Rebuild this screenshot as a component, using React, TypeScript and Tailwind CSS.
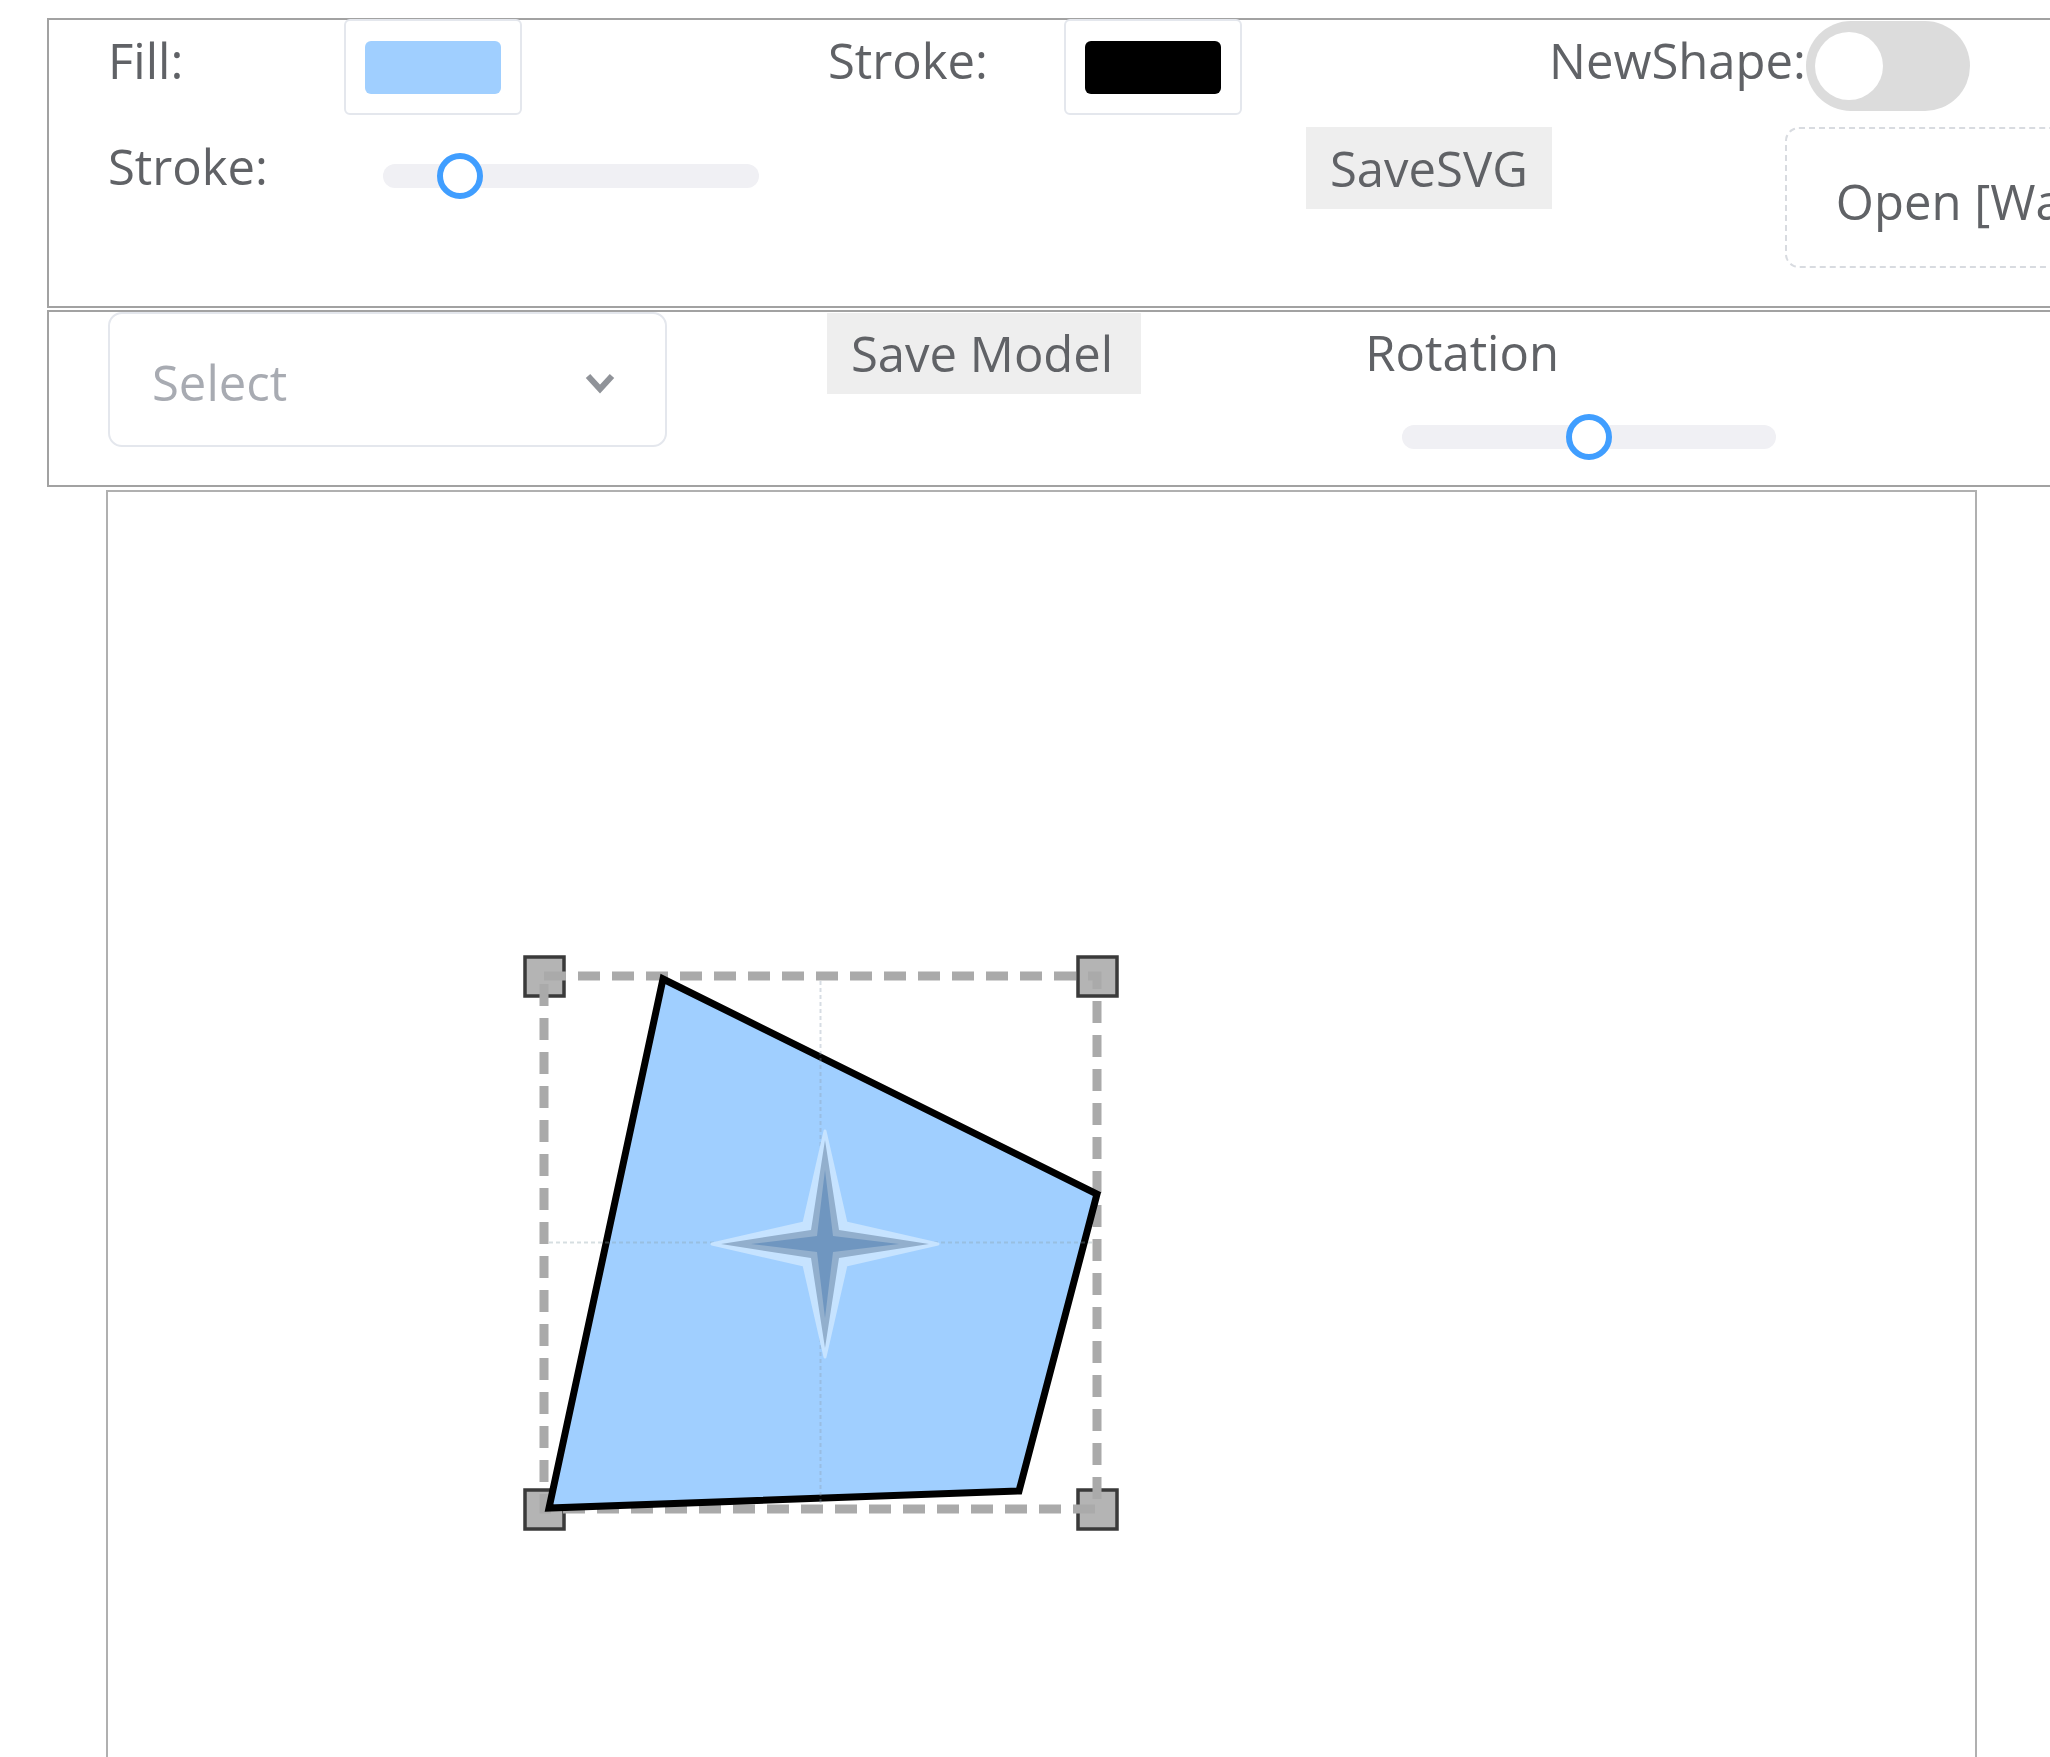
import React from 'react';

const Label: React.FC<{ text: string; className?: string }> = ({ text, className = '' }) => (
  <div className={`text-[49px] leading-none text-[#606266] whitespace-nowrap ${className}`}>{text}</div>
);

const Swatch: React.FC<{ color: string }> = ({ color }) => (
  <div className="mt-[-1px] flex h-[96px] w-[178px] shrink-0 items-center justify-center rounded-[6px] border-2 border-[#e4e7ed] bg-white">
    <div className="h-[53px] w-[136px] rounded-[6px]" style={{ backgroundColor: color }} />
  </div>
);

const Slider: React.FC<{ width: number; pos: number; className?: string }> = ({ width, pos, className = '' }) => (
  <div className={`relative flex h-[46px] shrink-0 items-center ${className}`} style={{ width }}>
    <div className="h-[24px] w-full rounded-full bg-[#f0f0f4]" />
    <div
      className="absolute top-0 h-[46px] w-[46px] rounded-full border-[6px] border-[#409eff] bg-white"
      style={{ left: pos - 23 }}
    />
  </div>
);

// editable shape on the canvas: polygon, bounding box with handles, center marker
const ShapeCanvas: React.FC = () => {
  const box = { x1: 436, y1: 484, x2: 989, y2: 1017 };
  const cx = (box.x1 + box.x2) / 2;
  const cy = (box.y1 + box.y2) / 2;
  const star = (x: number, y: number, R: number, w: number) =>
    `M${x} ${y - R} L${x + w} ${y - w} L${x + R} ${y} L${x + w} ${y + w} L${x} ${y + R} L${x - w} ${y + w} L${x - R} ${y} L${x - w} ${y - w} Z`;
  const corners = [
    [box.x1, box.y1],
    [box.x2, box.y1],
    [box.x1, box.y2],
    [box.x2, box.y2],
  ];
  return (
    <svg width="1869" height="1300" className="block">
      {corners.map(([x, y], i) => (
        <rect key={i} x={x - 19} y={y - 19} width="39" height="39" fill="#b4b4b4" stroke="#3a3a3a" strokeWidth="3.5" />
      ))}
      <rect
        x={box.x1}
        y={box.y1}
        width={box.x2 - box.x1}
        height={box.y2 - box.y1}
        fill="none"
        stroke="#aaaaaa"
        strokeWidth="9"
        strokeDasharray="22 12"
      />
      <polygon
        points="555,487 989,702 911,999 441,1016"
        fill="#a0cfff"
        stroke="#000"
        strokeWidth="7"
        strokeLinejoin="miter"
      />
      <line x1={cx} y1={box.y1 + 5} x2={cx} y2={box.y2 - 5} stroke="#8a9ab0" strokeOpacity="0.35" strokeWidth="2" strokeDasharray="4 3" />
      <line x1={box.x1 + 5} y1={cy} x2={box.x2 - 5} y2={cy} stroke="#8aa0a8" strokeOpacity="0.35" strokeWidth="2" strokeDasharray="4 3" />
      <path d={star(717, 752, 113, 21)} fill="#c6e3ff" strokeLinejoin="round" stroke="#c6e3ff" strokeWidth="3" />
      <path d={star(717, 752, 104, 14)} fill="#92afcd" />
      <path d={star(717, 752, 74, 8)} fill="#6f96c0" />
    </svg>
  );
};

const App: React.FC = () => {
  return (
    <div className="h-[1757px] w-[2050px] overflow-hidden bg-white font-['Open_Sans',sans-serif]">
      <div className="ml-[47px] mt-[18px] h-[290px] w-[2100px] border-2 border-r-0 border-[#a2a2a2]">
        <div className="flex h-[96px] items-start pl-[59px]">
          <Label text="Fill:" className="mt-[16px] w-[236px] shrink-0" />
          <Swatch color="#a0cfff" />
          <Label text="Stroke:" className="ml-[306px] mt-[16px] w-[236px] shrink-0" />
          <Swatch color="#000000" />
          <Label text="NewShape:" className="ml-[307px] mt-[16px] shrink-0" />
          <div className="ml-0 mt-[1px] flex h-[90px] w-[164px] shrink-0 items-center rounded-full bg-[#dcdcdc] pl-[9px]">
            <div className="h-[68px] w-[68px] rounded-full bg-white" />
          </div>
        </div>
        <div className="flex items-start pl-[59px]">
          <Label text="Stroke:" className="mt-[26px] w-[275px] shrink-0" />
          <Slider width={376} pos={77} className="mt-[37px]" />
          <button className="ml-[547px] mt-[11px] flex h-[82px] shrink-0 items-center bg-[#eeeeee] px-[24px] text-[49px] leading-none text-[#606266]">
            SaveSVG
          </button>
          <div className="ml-[233px] mt-[11px] flex h-[141px] w-[420px] shrink-0 items-center rounded-[14px] border-2 border-dashed border-[#d8dbe0] pl-[49px] pt-[8px]">
            <span className="whitespace-nowrap text-[49px] leading-none text-[#606266]">Open [Wavefront OBJ]</span>
          </div>
        </div>
      </div>

      <div className="ml-[47px] mt-[2px] flex h-[177px] w-[2100px] items-start border-2 border-r-0 border-[#a2a2a2] pl-[59px]">
        <div className="flex h-[135px] w-[559px] shrink-0 items-center justify-between rounded-[14px] border-2 border-[#e4e7ed] pl-[42px] pr-[49px] pt-[6px]">
          <span className="text-[49px] leading-none text-[#a8abb2]">Select</span>
          <svg width="32" height="22" viewBox="0 0 32 22">
            <polyline points="4,4 16,17 28,4" fill="none" stroke="#909399" strokeWidth="6" strokeLinejoin="miter" />
          </svg>
        </div>
        <button className="ml-[160px] mt-[1px] flex h-[81px] shrink-0 items-center bg-[#eeeeee] pl-[24px] pr-[28px] text-[49px] leading-none text-[#606266]">
          Save Model
        </button>
        <div className="ml-[224px] flex shrink-0 flex-col">
          <Label text="Rotation" className="mt-[16px]" />
          <Slider width={374} pos={187} className="ml-[37px] mt-[37px]" />
        </div>
      </div>

      <div className="ml-[106px] mt-[3px] h-[1300px] w-[1871px] border-2 border-[#b0b0b0]">
        <ShapeCanvas />
      </div>
    </div>
  );
};

export default App;
